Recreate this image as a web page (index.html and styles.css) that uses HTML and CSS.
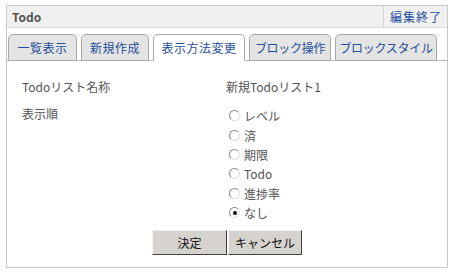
FILE: index.html
```html
<!DOCTYPE html>
<html lang="ja">
<head>
    <meta charset="UTF-8">
    <title>Todo</title>
    <link rel="stylesheet" href="styles.css">
</head>
<body>
    <div class="block">
        <div class="block-head">
            <span class="block-title">Todo</span>
            <a class="edit-end" href="#">編集終了</a>
        </div>
        <ul class="tabs">
            <li class="t1">一覧表示</li>
            <li class="t2">新規作成</li>
            <li class="t3 active">表示方法変更</li>
            <li class="t4">ブロック操作</li>
            <li class="t5">ブロックスタイル</li>
        </ul>
        <div class="panel">
            <div class="row">
                <div class="label">Todoリスト名称</div>
                <div class="value">新規Todoリスト1</div>
            </div>
            <div class="row">
                <div class="label">表示順</div>
                <ul class="radios">
                    <li><label><input type="radio" name="order">レベル</label></li>
                    <li><label><input type="radio" name="order">済</label></li>
                    <li><label><input type="radio" name="order">期限</label></li>
                    <li><label><input type="radio" name="order">Todo</label></li>
                    <li><label><input type="radio" name="order">進捗率</label></li>
                    <li><label><input type="radio" name="order" checked>なし</label></li>
                </ul>
            </div>
            <div class="buttons">
                <button class="btn">決定</button>
                <button class="btn">キャンセル</button>
            </div>
        </div>
    </div>
</body>
</html>
```
FILE: styles.css
```css
*{
    margin: 0;
    padding: 0;
    box-sizing: border-box;
}
body{
    background-color: #fff;
    font-family: "Noto Sans CJK JP", "Noto Sans", sans-serif;
    font-size: 12px;
    color: #555;
}
.block{
    margin: 5px 0 0 6px;
    width: 442px;
    height: 263px;
    border: 1px solid #c8c8c8;
    display: flex;
    flex-direction: column;
}
.block-head{
    height: 22px;
    display: flex;
    align-items: center;
    background-color: #f0f0f0;
    border-bottom: 1px solid #dcdcdc;
}
.block-title{
    flex: 1;
    padding-left: 5px;
    font-weight: bold;
    color: #555;
}
.edit-end{
    height: 100%;
    display: flex;
    align-items: center;
    padding: 0 5px 0 6px;
    border-left: 1px solid #d4d4d4;
    color: #1f4e9c;
    text-decoration: none;
    font-size: 12px;
    letter-spacing: 1px;
}
.tabs{
    list-style: none;
    display: flex;
    gap: 4px;
    padding: 6px 0 0 1px;
    border-bottom: 1px solid #b8b8b8;
}
.tabs li{
    height: 27px;
    margin-bottom: -1px;
    display: flex;
    align-items: center;
    justify-content: center;
    white-space: nowrap;
    border: 1px solid #a8a8a8;
    border-radius: 5px 5px 0 0;
    background-color: #e4e4e4;
    color: #1f4e9c;
    font-size: 12px;
    letter-spacing: 0.5px;
}
.tabs .t1{ width: 69px; }
.tabs .t2{ width: 68px; }
.tabs .t3{ width: 92px; }
.tabs .t4{ width: 82px; letter-spacing: -0.3px; }
.tabs .t5{ width: 102px; letter-spacing: -0.3px; }
.tabs li.active{
    background-color: #fff;
    border-bottom-color: #fff;
}
.panel{
    flex: 1;
    padding: 16px 0 0 15px;
}
.row{
    display: flex;
    margin-bottom: 8px;
}
.label{
    width: 204px;
    line-height: 19px;
}
.value{
    line-height: 19px;
}
.radios{
    list-style: none;
    margin-top: 2px;
    padding-left: 3px;
}
.radios li{
    height: 19.4px;
    display: flex;
    align-items: center;
}
.radios label{
    display: flex;
    align-items: center;
}
.radios input{
    appearance: none;
    width: 11px;
    height: 11px;
    margin-right: 4px;
    border: 1px solid #888;
    border-bottom-color: #ddd;
    border-right-color: #ddd;
    border-radius: 50%;
    background-color: #fff;
    display: flex;
    align-items: center;
    justify-content: center;
}
.radios input:checked::after{
    content: "";
    width: 4px;
    height: 4px;
    border-radius: 50%;
    background-color: #000;
}
.buttons{
    display: flex;
    justify-content: center;
    gap: 1px;
    margin-top: 4px;
    padding-right: 15px;
}
.btn{
    width: 75px;
    height: 25px;
    font-family: inherit;
    font-size: 12px;
    color: #111;
    background-color: #d6d3ce;
    border: 1px solid;
    border-color: #f4f4f4 #404040 #404040 #f4f4f4;
}
.btn + .btn{
    width: 74px;
}
```
